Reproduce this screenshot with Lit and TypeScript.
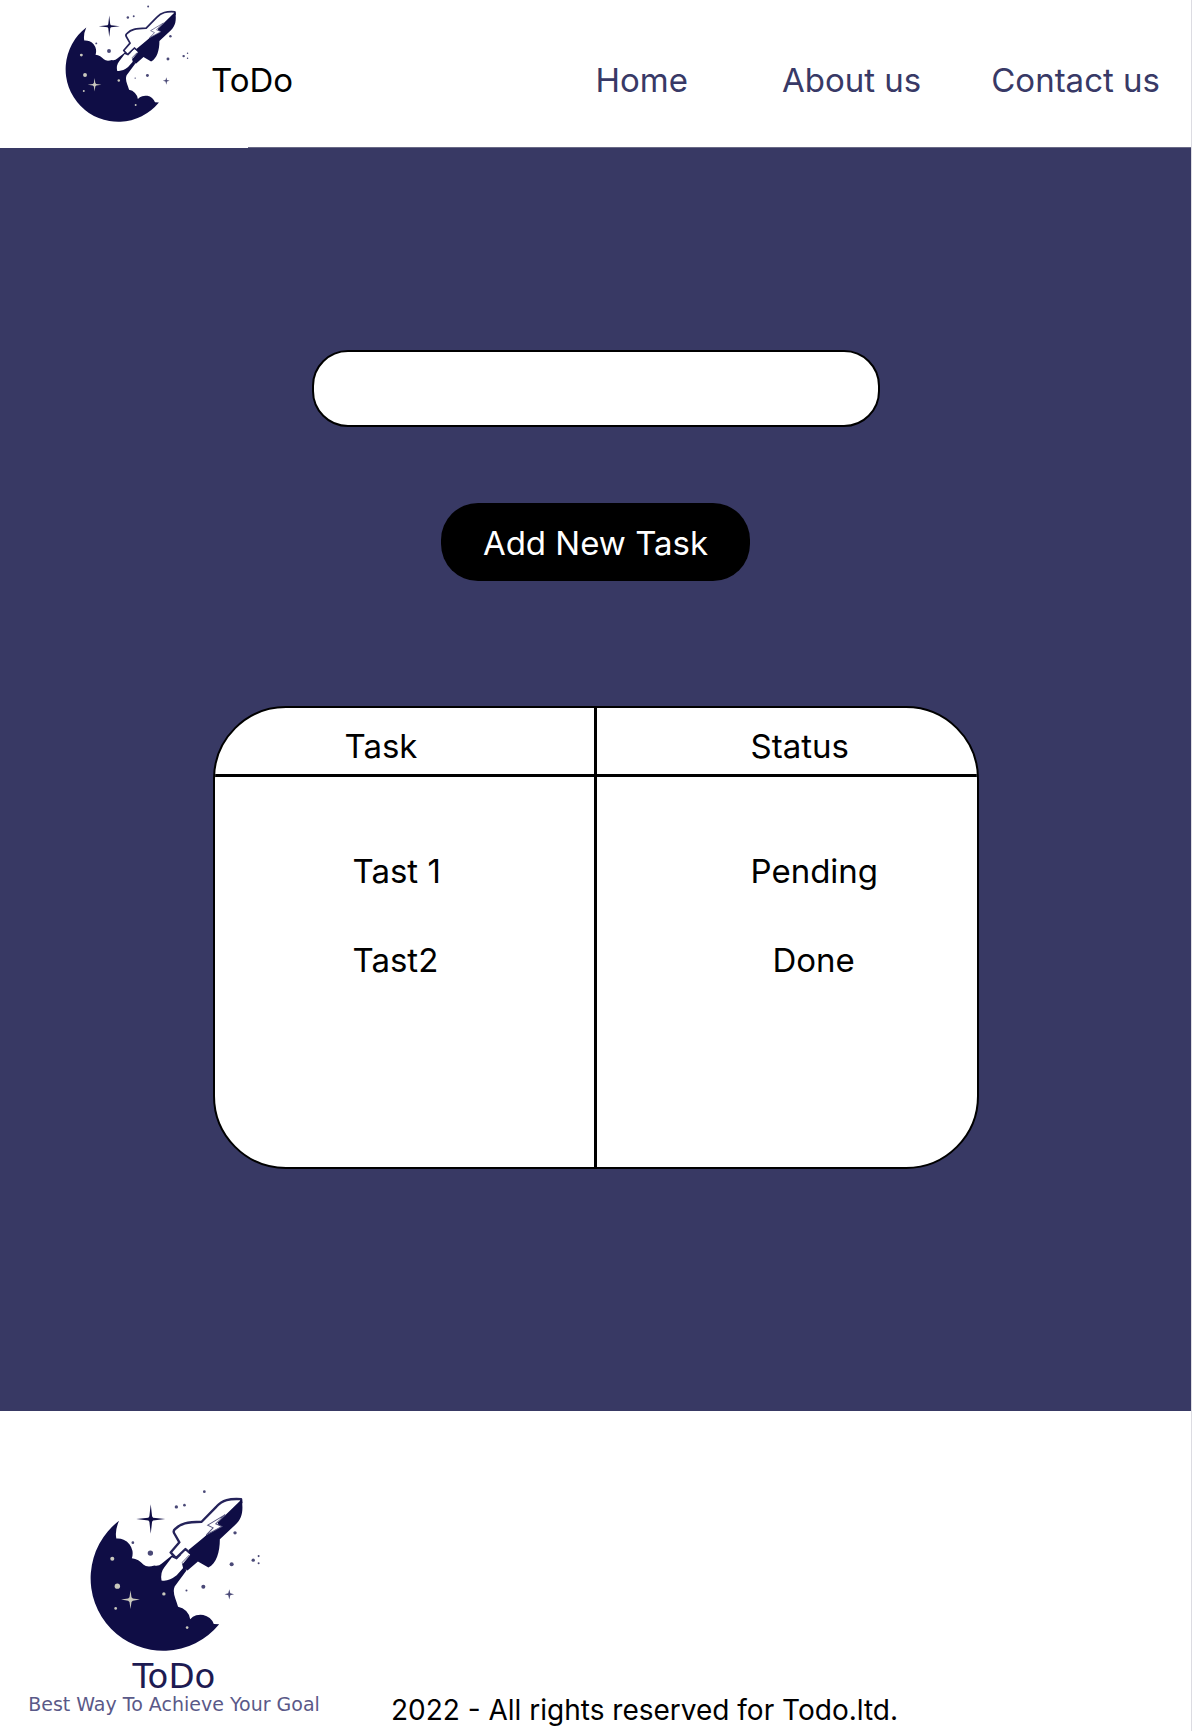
import { LitElement, html, css, svg } from "lit";
import { customElement, property, state } from "lit/decorators.js";

interface Task {
  name: string;
  status: string;
}

interface Dot {
  x: number;
  y: number;
  r: number;
}

const skyDots: Dot[] = [
  { x: 378, y: 34, r: 4 },
  { x: 295, y: 79, r: 5 },
  { x: 319, y: 74, r: 4 },
  { x: 166, y: 185, r: 4 },
  { x: 218, y: 216, r: 8 },
  { x: 469, y: 156, r: 5 },
  { x: 459, y: 249, r: 6 },
  { x: 375, y: 316, r: 6 },
  { x: 325, y: 327, r: 3 },
  { x: 523, y: 237, r: 5 },
  { x: 539, y: 225, r: 3 },
  { x: 539, y: 246, r: 3 },
];

const moonDots: Dot[] = [
  { x: 105, y: 233, r: 6 },
  { x: 120, y: 314, r: 8 },
  { x: 258, y: 337, r: 5 },
  { x: 115, y: 380, r: 4 },
  { x: 327, y: 437, r: 4 },
];

@customElement("todo-logo")
export class TodoLogo extends LitElement {
  static styles = css`
    :host {
      display: block;
    }
    .art {
      display: block;
      width: 100%;
      height: auto;
    }
    .navy {
      fill: #0f0d45;
    }
    .white {
      fill: #fff;
    }
    .line {
      fill: #fff;
      stroke: #25235a;
      stroke-width: 7;
      stroke-linejoin: round;
    }
    .bolt {
      fill: #fff;
      stroke: #55547f;
      stroke-width: 3;
    }
    .soft {
      fill: #4a4977;
    }
    .cream {
      fill: #c9c8bd;
    }
  `;

  render() {
    return html`
      <svg class="art" viewBox="30 20 519 495" role="img" aria-label="ToDo rocket logo">
        <path
          class="navy"
          d="M125 120 A215 215 0 1 0 422 427 L406 426 A42 42 0 0 0 336 412 A43 43 0 0 0 300 375 C294 352 282 334 290 315 L325 268 L312 245 L335 222 L283 222 L252 247 Q242 256 230 253 Q208 260 197 250 Q184 234 163 231 A44 44 0 0 0 117 173 Q112 150 125 120Z"
        />
        <path
          class="line"
          d="M278 214 L304 184 L289 158 Q284 150 292 144 C308 128 326 124 370 123 L414 78 C432 58 452 54 487 56 L488 66 L335 216 L322 204 L294 231 Z"
        />
        <path
          class="navy"
          d="M489 56 C494 92 490 114 470 132 L424 175 C424 214 414 246 390 259 L359 241 L328 268 L308 255 L336 222 L331 207 L388 160 L426 138 L417 126 L440 104 Z"
        />
        <path class="bolt" d="M440 102 L388 133 L404 141 L384 162 L430 137 L412 129 Z" />
        <path
          class="white"
          d="M282 228 L296 235 L322 209 L334 220 L311 244 L315 260 L296 282 Q272 301 251 297 Q247 274 259 259 Z"
        />
        <path
          class="navy"
          d="M219 71 L223 107 L226 111 L262 115 L226 119 L223 123 L219 159 L215 123 L212 119 L176 115 L212 111 L215 107 Z"
        />
        <path class="soft" d="M452 323 L455 335 L466 338 L455 341 L452 354 L449 341 L438 338 L449 335 Z" />
        <path
          class="cream"
          d="M159 326 L162 347 L166 351 L187 354 L166 357 L162 361 L159 382 L156 361 L152 357 L131 354 L152 351 L156 347 Z"
        />
        ${skyDots.map((d) => svg`<circle class="soft" cx=${d.x} cy=${d.y} r=${d.r} />`)}
        ${moonDots.map((d) => svg`<circle class="cream" cx=${d.x} cy=${d.y} r=${d.r} />`)}
      </svg>
    `;
  }
}

@customElement("todo-header")
export class TodoHeader extends LitElement {
  static styles = css`
    :host {
      display: block;
    }
    .bar {
      display: flex;
      align-items: flex-start;
      justify-content: space-between;
      box-sizing: border-box;
      min-height: 148px;
      padding: 3px 31px 0 63px;
      background: linear-gradient(#6a6a86, #6a6a86) 248px 100% / 100% 1px no-repeat;
    }
    .brand {
      display: flex;
      align-items: flex-start;
      gap: 21px;
    }
    .logo {
      width: 127px;
    }
    .name,
    .nav {
      margin: 57px 0 0;
      font-size: 33px;
      font-weight: 400;
      line-height: 40px;
    }
    .nav {
      display: flex;
    }
    .link {
      color: #383966;
      text-decoration: none;
      white-space: nowrap;
    }
    .link.home {
      margin-right: 94px;
    }
    .link.about {
      margin-right: 70px;
    }
  `;

  render() {
    return html`
      <header class="bar">
        <div class="brand">
          <todo-logo class="logo"></todo-logo>
          <h1 class="name">ToDo</h1>
        </div>
        <nav class="nav">
          <a class="link home" href="#home">Home</a>
          <a class="link about" href="#about">About us</a>
          <a class="link" href="#contact">Contact us</a>
        </nav>
      </header>
    `;
  }
}

@customElement("task-table")
export class TaskTable extends LitElement {
  @property({ attribute: false }) tasks: Task[] = [];

  static styles = css`
    :host {
      display: block;
    }
    .frame {
      box-sizing: border-box;
      min-height: 463px;
      overflow: hidden;
      border: 2px solid #000;
      border-radius: 73px;
      background: linear-gradient(#000, #000) 50% 0 / 3px 100% no-repeat #fff;
    }
    .table {
      width: 100%;
      table-layout: fixed;
      border-collapse: separate;
      border-spacing: 0;
      font-size: 33px;
      line-height: 40px;
    }
    .cell {
      padding: 49px 0 0 138px;
      font-weight: 400;
      text-align: left;
    }
    .cell.status {
      padding-left: 155px;
    }
    .cell.done {
      padding-left: 177px;
    }
    .head .cell {
      padding: 18px 0 8px 130px;
      border-bottom: 3px solid #000;
    }
    .head .cell.status {
      padding-left: 155px;
    }
    .row:first-child .cell {
      padding-top: 74px;
    }
  `;

  render() {
    return html`
      <div class="frame">
        <table class="table">
          <thead>
            <tr class="head">
              <th class="cell" scope="col">Task</th>
              <th class="cell status" scope="col">Status</th>
            </tr>
          </thead>
          <tbody>
            ${this.tasks.map(
              (t) => html`<tr class="row">
                <td class="cell">${t.name}</td>
                <td class="cell status ${t.status.toLowerCase()}">${t.status}</td>
              </tr>`,
            )}
          </tbody>
        </table>
      </div>
    `;
  }
}

@customElement("todo-footer")
export class TodoFooter extends LitElement {
  static styles = css`
    :host {
      display: block;
    }
    .bar {
      display: flex;
      align-items: flex-end;
      gap: 70px;
      padding: 76px 27px 3px;
    }
    .brand {
      display: flex;
      flex-direction: column;
      align-items: center;
      width: 294px;
      padding-bottom: 14px;
      font-family: "DejaVu Sans", sans-serif;
      color: #1d1b52;
    }
    .logo {
      width: 175px;
    }
    .name {
      margin: 4px 0 0;
      font-size: 34px;
      line-height: 36px;
    }
    .tagline {
      margin: 0;
      font-size: 19px;
      line-height: 20px;
      color: #5a5988;
      white-space: nowrap;
    }
    .rights {
      margin: 0;
      font-size: 28px;
      line-height: 36px;
    }
  `;

  render() {
    return html`
      <footer class="bar">
        <div class="brand">
          <todo-logo class="logo"></todo-logo>
          <p class="name">ToDo</p>
          <p class="tagline">Best Way To Achieve Your Goal</p>
        </div>
        <p class="rights">2022 - All rights reserved for Todo.ltd.</p>
      </footer>
    `;
  }
}

@customElement("app-root")
export class AppRoot extends LitElement {
  @state() private draft = "";
  @state() private tasks: Task[] = [
    { name: "Tast 1", status: "Pending" },
    { name: "Tast2", status: "Done" },
  ];

  static styles = css`
    :host {
      display: block;
      border-right: 1px solid #dcdce2;
      background: #fff;
      color: #000;
      font-family: Inter, "Liberation Sans", sans-serif;
    }
    .main {
      display: flex;
      flex-direction: column;
      align-items: center;
      padding: 202px 24px 242px;
      background: #383964;
    }
    .form {
      display: flex;
      flex-direction: column;
      align-items: center;
      gap: 76px;
      width: 100%;
    }
    .input {
      box-sizing: border-box;
      width: 100%;
      max-width: 568px;
      height: 77px;
      padding: 0 32px;
      border: 2px solid #000;
      border-radius: 36px;
      background: #fff;
      font: inherit;
      font-size: 33px;
    }
    .add {
      padding: 20px 42px 18px;
      border: 0;
      border-radius: 37px;
      background: #000;
      color: #fff;
      font: inherit;
      font-size: 33px;
      line-height: 40px;
      white-space: nowrap;
    }
    .tasks {
      width: 100%;
      max-width: 766px;
      margin-top: 125px;
    }
  `;

  private onInput(e: Event) {
    this.draft = (e.target as HTMLInputElement).value;
  }

  private onSubmit(e: Event) {
    e.preventDefault();
    const name = this.draft.trim();
    if (!name) return;
    this.tasks = [...this.tasks, { name, status: "Pending" }];
    this.draft = "";
  }

  render() {
    return html`
      <todo-header></todo-header>
      <main class="main">
        <form class="form" @submit=${this.onSubmit}>
          <input
            class="input"
            type="text"
            aria-label="New task"
            .value=${this.draft}
            @input=${this.onInput}
          />
          <button class="add" type="submit">Add New Task</button>
        </form>
        <task-table class="tasks" .tasks=${this.tasks}></task-table>
      </main>
      <todo-footer></todo-footer>
    `;
  }
}
